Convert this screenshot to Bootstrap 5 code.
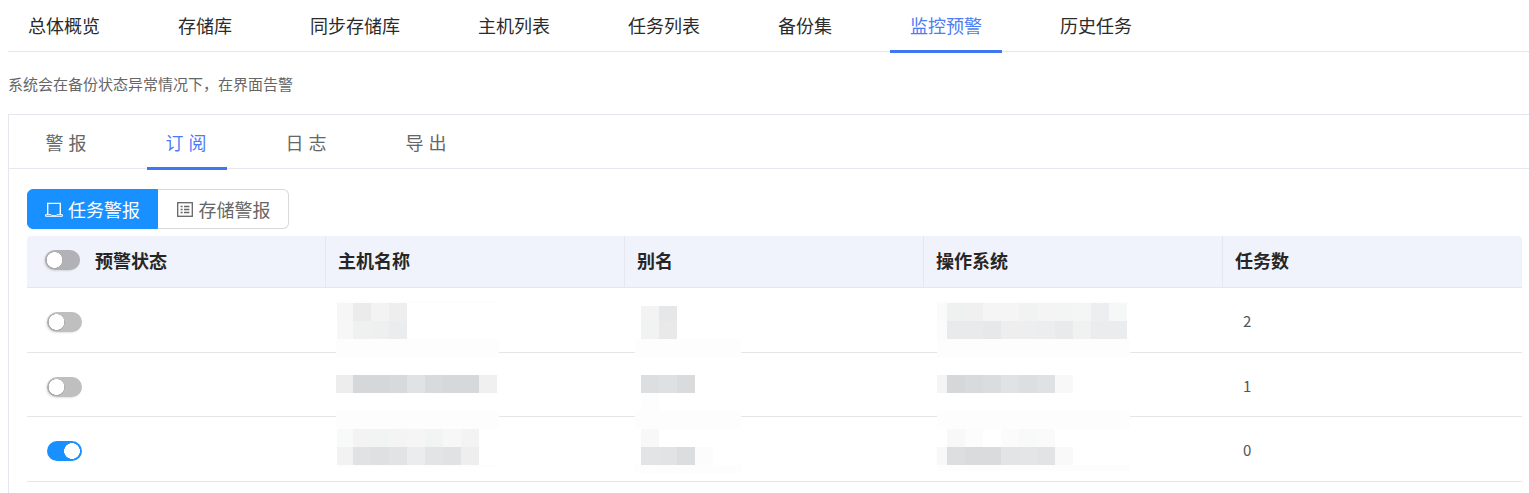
<!DOCTYPE html>
<html lang="zh">
<head>
<meta charset="utf-8">
<title>监控预警</title>
<link href="https://cdn.jsdelivr.net/npm/bootstrap@5.3.0/dist/css/bootstrap.min.css" rel="stylesheet">
<style>
html,body{height:493px;overflow:hidden}
body{background:#fff;font-family:"Noto Sans CJK SC","Liberation Sans",sans-serif;color:#333;padding:0 0 0 8px}
.top-tabs{height:52px;border-bottom:1px solid #e4e7ed;flex-wrap:nowrap;gap:38px}
.top-tabs .nav-link{height:53px;padding:0 20px;font-size:18px;line-height:51px;color:#2b2b2b;border-bottom:3px solid transparent;border-radius:0}
.top-tabs .nav-link.active{color:#4d7cf5;border-bottom-color:#3f76f2}
.lead-note{margin:0;height:62px;font-size:15px;line-height:63px;color:#666;letter-spacing:0}
.alarm-panel{border:1px solid #e6e6ef;border-right:0;border-bottom:0;border-radius:0;width:1530px;height:400px}
.sub-tabs{height:54px;border-bottom:1px solid #e6e7ef;gap:40px;padding-left:18px;flex-wrap:nowrap}
.sub-tabs .nav-link{width:80px;height:55px;padding:0 0 0 3px;text-align:center;font-size:18px;line-height:55px;letter-spacing:5px;color:#666;border-bottom:3px solid transparent;border-radius:0}
.sub-tabs .nav-link.active{color:#4d7cf5;border-bottom-color:#3f76f2}
.panel-body{padding:20px 0 0 18px;width:1513px}
.seg-group{height:40px;display:flex;width:262px}
.seg-group .btn{height:40px;padding:0;font-size:18px;line-height:38px;display:flex;align-items:center;justify-content:center;gap:5px;border-radius:0}
.seg-on{width:131px;background:#1890ff;border:1px solid #1890ff;color:#fff;border-radius:6px 0 0 6px!important}
.seg-on:hover{background:#1890ff;color:#fff}
.seg-off{width:131px;background:#fff;border:1px solid #d9d9d9;border-left:0;color:#666;border-radius:0 6px 6px 0!important}
.table-wrap{margin-top:7px;width:1495px;position:relative}
.alert-table{margin:0;table-layout:fixed;width:1495px;border-collapse:separate;border-spacing:0}
.alert-table th{background:#f0f3fb;height:52px;padding:0 12px 2px;font-size:18px;font-weight:700;color:#262626;border-bottom:1px solid #e4e7ed;border-right:1px solid #e4e7ed;vertical-align:middle;box-shadow:none}
.alert-table th:last-child{border-right:0}
.alert-table thead tr>th:first-child{border-top-left-radius:4px}
.alert-table thead tr>th:last-child{border-top-right-radius:4px}
.alert-table td{height:64.5px;padding:3px 20px 0;font-size:15px;color:#555;border-bottom:1px solid #e6e6e6;vertical-align:middle;box-shadow:none}
.head-status{display:flex;align-items:center;gap:15px;padding-left:6px}
.form-switch .tog{width:35px;height:20px;margin:0;float:none;display:block;border:0;border-radius:10px;box-shadow:-1px 1px 2px rgba(0,0,0,.12);background-color:#bfbfbf;background-image:radial-gradient(circle 8px at 9.5px 10px,#fff 95%,transparent 100%),radial-gradient(circle 9px at 9px 10.5px,#acacac 94%,transparent 100%);background-position:0 0;background-size:auto}
.form-switch .tog:focus{box-shadow:-1px 1px 2px rgba(0,0,0,.12);border:0}
.form-switch .tog:checked{background-color:#1890ff;box-shadow:none;background-image:radial-gradient(circle 8px at 25px 10px,#fff 96%,transparent 100%);background-position:0 0}
.form-switch .head-tog{background-color:#b1b1b7;transform:translateY(-1px)}
.form-switch{padding:0;margin:0;min-height:0}
.row-tog{margin:2px 0 0;padding-left:0}
.blur-layer{position:absolute;left:0;top:0;width:1495px;height:247px;pointer-events:none}
.ico{width:18px;height:18px;flex:none}
</style>
</head>
<body>
<ul class="nav top-tabs">
  <li class="nav-item"><a class="nav-link" href="#">总体概览</a></li>
  <li class="nav-item"><a class="nav-link" href="#">存储库</a></li>
  <li class="nav-item"><a class="nav-link" href="#">同步存储库</a></li>
  <li class="nav-item"><a class="nav-link" href="#">主机列表</a></li>
  <li class="nav-item"><a class="nav-link" href="#">任务列表</a></li>
  <li class="nav-item"><a class="nav-link" href="#">备份集</a></li>
  <li class="nav-item"><a class="nav-link active" href="#">监控预警</a></li>
  <li class="nav-item"><a class="nav-link" href="#">历史任务</a></li>
</ul>
<p class="lead-note">系统会在备份状态异常情况下，在界面告警</p>
<div class="alarm-panel">
  <ul class="nav sub-tabs">
    <li class="nav-item"><a class="nav-link" href="#">警报</a></li>
    <li class="nav-item"><a class="nav-link active" href="#">订阅</a></li>
    <li class="nav-item"><a class="nav-link" href="#">日志</a></li>
    <li class="nav-item"><a class="nav-link" href="#">导出</a></li>
  </ul>
  <div class="panel-body">
    <div class="seg-group" role="group">
      <button type="button" class="btn seg-on">
        <svg class="ico" viewBox="0 0 18 18" fill="none" stroke="#fff" stroke-width="1.4"><path d="M2.7 14.4V3.4h12.6v11"/><path d="M.6 14.7h5.6l.8 1h4l.8-1h5.6v1.6H.6z" stroke-width="1"/></svg>任务警报</button>
      <button type="button" class="btn seg-off">
        <svg class="ico" viewBox="0 0 18 18" fill="none" stroke="#666" stroke-width="1.3"><rect x="1.7" y="2.7" width="14.6" height="13.6"/><path d="M4.6 6.5h2M8 6.5h5.4M4.6 9.5h2M8 9.5h5.4M4.6 12.5h2M8 12.5h5.4"/></svg>存储警报</button>
    </div>
    <div class="table-wrap">
      <table class="table alert-table">
        <colgroup><col style="width:299px"><col style="width:299px"><col style="width:299px"><col style="width:299px"><col style="width:299px"></colgroup>
        <thead>
          <tr>
            <th><div class="head-status"><span class="form-check form-switch"><input class="form-check-input tog head-tog" type="checkbox" role="switch" aria-label="全部预警状态"></span>预警状态</div></th>
            <th>主机名称</th><th>别名</th><th>操作系统</th><th>任务数</th>
          </tr>
        </thead>
        <tbody>
          <tr><td><span class="form-check form-switch row-tog d-block"><input class="form-check-input tog" type="checkbox" role="switch" aria-label="预警状态"></span></td><td></td><td></td><td></td><td>2</td></tr>
          <tr><td><span class="form-check form-switch row-tog d-block"><input class="form-check-input tog" type="checkbox" role="switch" aria-label="预警状态"></span></td><td></td><td></td><td></td><td>1</td></tr>
          <tr><td><span class="form-check form-switch row-tog d-block"><input class="form-check-input tog" type="checkbox" role="switch" checked aria-label="预警状态"></span></td><td></td><td></td><td></td><td>0</td></tr>
        </tbody>
      </table>
      <svg class="blur-layer" viewBox="27 236 1495 247" shape-rendering="crispEdges" aria-hidden="true">
        <g fill="#fdfdfd">
          <rect x="336" y="301" width="163" height="2"/><rect x="336" y="339" width="163" height="18"/><rect x="336" y="411" width="163" height="18"/><rect x="336" y="465" width="163" height="2"/>
          <rect x="635" y="339" width="106" height="18"/><rect x="635" y="411" width="106" height="18"/><rect x="635" y="465" width="106" height="8"/>
          <rect x="937" y="301" width="193" height="2"/><rect x="937" y="339" width="193" height="18"/><rect x="937" y="411" width="193" height="18"/><rect x="937" y="465" width="193" height="6"/>
        </g>
        <rect x="337" y="303" width="16" height="18" fill="#f6f6f6"/><rect x="353" y="303" width="18" height="18" fill="#ebebeb"/><rect x="371" y="303" width="18" height="18" fill="#f3f3f3"/><rect x="389" y="303" width="18" height="18" fill="#eee"/>
        <rect x="337" y="321" width="16" height="18" fill="#f7f7f7"/><rect x="353" y="321" width="18" height="18" fill="#eff0f0"/><rect x="371" y="321" width="18" height="18" fill="#eef0ef"/><rect x="389" y="321" width="18" height="18" fill="#ebecee"/>
        <rect x="336" y="375" width="17" height="18" fill="#ededed"/><rect x="353" y="375" width="36" height="18" fill="#d6d7d9"/><rect x="389" y="375" width="18" height="18" fill="#d8d9db"/><rect x="407" y="375" width="18" height="18" fill="#e1e2e4"/><rect x="425" y="375" width="18" height="18" fill="#d9dadc"/><rect x="443" y="375" width="36" height="18" fill="#d7d8da"/><rect x="479" y="375" width="18" height="18" fill="#f0f0f0"/>
        <rect x="337" y="429" width="16" height="18" fill="#f8faf9"/><rect x="353" y="429" width="18" height="18" fill="#f3f3f3"/><rect x="371" y="429" width="18" height="18" fill="#f2f3f3"/><rect x="389" y="429" width="18" height="18" fill="#f3f4f3"/><rect x="407" y="429" width="18" height="18" fill="#f5f5f5"/><rect x="425" y="429" width="18" height="18" fill="#f2f4f3"/><rect x="443" y="429" width="18" height="18" fill="#f6f7f6"/><rect x="461" y="429" width="18" height="18" fill="#f3f3f3"/>
        <rect x="337" y="447" width="16" height="18" fill="#f2f2f2"/><rect x="353" y="447" width="18" height="18" fill="#e1e2e4"/><rect x="371" y="447" width="18" height="18" fill="#dfe0e2"/><rect x="389" y="447" width="18" height="18" fill="#e2e3e5"/><rect x="407" y="447" width="18" height="18" fill="#ebecee"/><rect x="425" y="447" width="18" height="18" fill="#e3e4e6"/><rect x="443" y="447" width="18" height="18" fill="#e1e2e4"/><rect x="461" y="447" width="18" height="18" fill="#eee"/>
        <rect x="641" y="306" width="18" height="15" fill="#f3f3f3"/><rect x="659" y="306" width="18" height="15" fill="#e6e7e9"/><rect x="641" y="321" width="18" height="18" fill="#f1f3f2"/><rect x="659" y="321" width="18" height="18" fill="#e9e9e9"/>
        <rect x="641" y="375" width="18" height="18" fill="#dddee0"/><rect x="659" y="375" width="18" height="18" fill="#dfe0e2"/><rect x="677" y="375" width="18" height="18" fill="#dadbdd"/><rect x="641" y="393" width="18" height="18" fill="#fdfdfd"/>
        <rect x="641" y="429" width="18" height="18" fill="#f8f8f8"/><rect x="641" y="447" width="18" height="18" fill="#e3e4e6"/><rect x="659" y="447" width="18" height="18" fill="#e2e3e5"/><rect x="677" y="447" width="18" height="18" fill="#dcdddf"/><rect x="695" y="447" width="18" height="18" fill="#fcfcfc"/>
        <rect x="937" y="303" width="10" height="18" fill="#fafafa"/><rect x="947" y="303" width="18" height="18" fill="#eff1f0"/><rect x="965" y="303" width="18" height="18" fill="#f0f0f0"/><rect x="983" y="303" width="36" height="18" fill="#f5f5f5"/><rect x="1019" y="303" width="18" height="18" fill="#f1f3f2"/><rect x="1037" y="303" width="18" height="18" fill="#f4f4f4"/><rect x="1055" y="303" width="18" height="18" fill="#f3f4f4"/><rect x="1073" y="303" width="18" height="18" fill="#f4f6f5"/><rect x="1091" y="303" width="18" height="18" fill="#edeef0"/><rect x="1109" y="303" width="18" height="18" fill="#f6f8f7"/>
        <rect x="937" y="321" width="10" height="18" fill="#fafbfa"/><rect x="947" y="321" width="36" height="18" fill="#e9eaec"/><rect x="983" y="321" width="18" height="18" fill="#e7e8ea"/><rect x="1001" y="321" width="18" height="18" fill="#eee"/><rect x="1019" y="321" width="18" height="18" fill="#edeeef"/><rect x="1037" y="321" width="18" height="18" fill="#ecedef"/><rect x="1055" y="321" width="18" height="18" fill="#e9eaec"/><rect x="1073" y="321" width="18" height="18" fill="#f0f2f1"/><rect x="1091" y="321" width="36" height="18" fill="#ebecee"/>
        <rect x="937" y="375" width="10" height="18" fill="#f4f4f4"/><rect x="947" y="375" width="18" height="18" fill="#d6d7d9"/><rect x="965" y="375" width="18" height="18" fill="#d9dadc"/><rect x="983" y="375" width="18" height="18" fill="#dbdcde"/><rect x="1001" y="375" width="18" height="18" fill="#e1e2e4"/><rect x="1019" y="375" width="18" height="18" fill="#dddee0"/><rect x="1037" y="375" width="18" height="18" fill="#e0e1e3"/><rect x="1055" y="375" width="18" height="18" fill="#f8f8f8"/>
        <rect x="947" y="429" width="18" height="18" fill="#f8f8f8"/><rect x="965" y="429" width="18" height="18" fill="#fcfcfc"/><rect x="983" y="429" width="18" height="18" fill="#fff"/><rect x="1001" y="429" width="18" height="18" fill="#fbfbfb"/><rect x="1019" y="429" width="18" height="18" fill="#f8faf9"/><rect x="1037" y="429" width="18" height="18" fill="#fafafa"/>
        <rect x="937" y="447" width="10" height="18" fill="#f8f8f8"/><rect x="947" y="447" width="18" height="18" fill="#dddee0"/><rect x="965" y="447" width="36" height="18" fill="#dadbdd"/><rect x="1001" y="447" width="18" height="18" fill="#e3e4e6"/><rect x="1019" y="447" width="18" height="18" fill="#e4e5e7"/><rect x="1037" y="447" width="18" height="18" fill="#e2e3e5"/><rect x="1055" y="447" width="18" height="18" fill="#f9f9f9"/>
      </svg>
    </div>
  </div>
</div>
<script src="https://cdn.jsdelivr.net/npm/bootstrap@5.3.0/dist/js/bootstrap.bundle.min.js"></script>
</body>
</html>
